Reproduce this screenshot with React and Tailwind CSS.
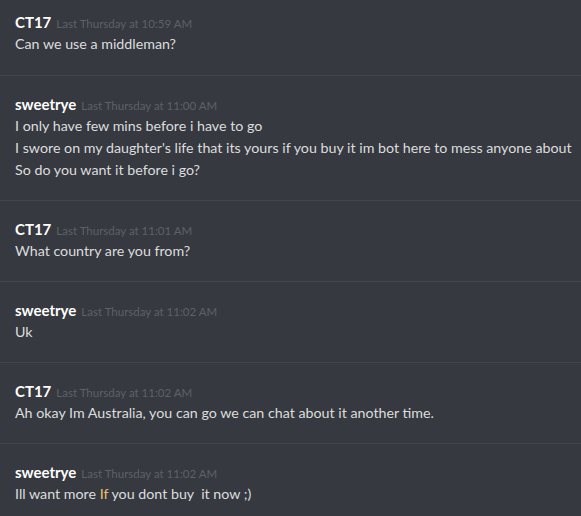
import React from "react";

const msgs = [
  { name: "CT17", time: "Last Thursday at 10:59 AM", lines: ["Can we use a middleman?"] },
  {
    name: "sweetrye",
    time: "Last Thursday at 11:00 AM",
    lines: [
      "I only have few mins before i have to go",
      "I swore on my daughter's life that its yours if you buy it im bot here to mess anyone about",
      "So do you want it before i go?",
    ],
  },
  { name: "CT17", time: "Last Thursday at 11:01 AM", lines: ["What country are you from?"] },
  { name: "sweetrye", time: "Last Thursday at 11:02 AM", lines: ["Uk"] },
  { name: "CT17", time: "Last Thursday at 11:02 AM", lines: ["Ah okay Im Australia, you can go we can chat about it another time."] },
  {
    name: "sweetrye",
    time: "Last Thursday at 11:02 AM",
    lines: [
      <>
        Ill want more <span className="text-[#e6c072]">If</span> you dont buy&nbsp; it now ;)
      </>,
    ],
  },
];

export default function App() {
  return (
    <div
      className="w-[581px] h-[516px] overflow-hidden bg-[#36393f]"
      style={{ fontFamily: "Lato, 'Open Sans', sans-serif" }}
    >
      {msgs.map((m, i) => (
        <div key={i} className={i > 0 ? "border-t border-[#42454b] px-[15px]" : "px-[15px]"}>
          <div className={i === 0 ? "pt-[11px] pb-[20px]" : "pt-[17px] pb-[19px]"}>
            <div className="flex items-baseline gap-[5px] h-[22px]">
              <span className="text-white font-bold text-[15px] leading-[22px]">{m.name}</span>
              <span className="text-[#5e6167] text-[11.5px]">{m.time}</span>
            </div>
            {m.lines.map((l, j) => (
              <div key={j} className="text-[#dcddde] text-[14.25px] leading-[22px] whitespace-nowrap">
                {l}
              </div>
            ))}
          </div>
        </div>
      ))}
    </div>
  );
}
